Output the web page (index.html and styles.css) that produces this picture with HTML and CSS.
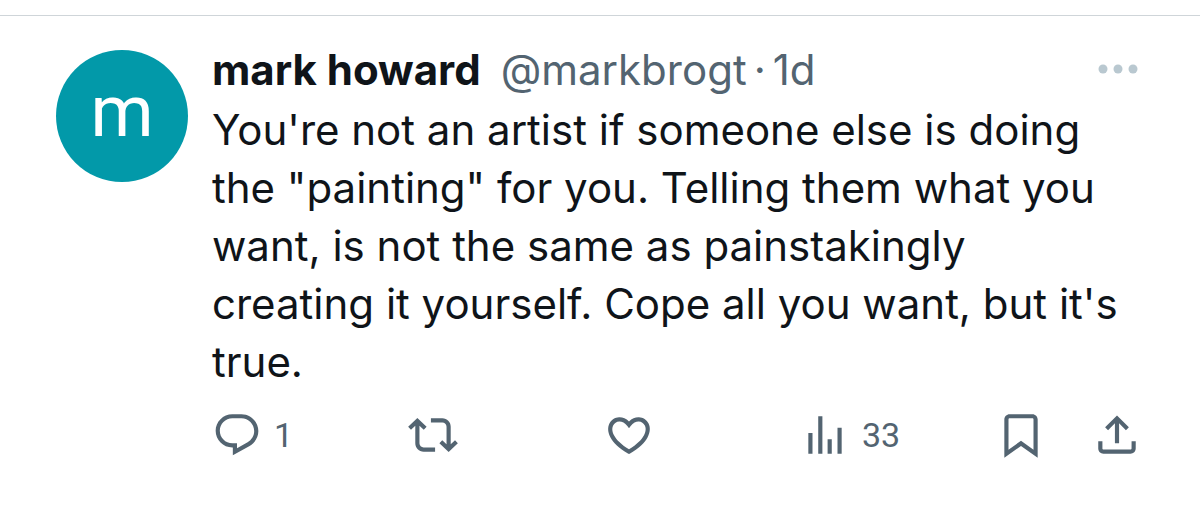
FILE: index.html
```
<!DOCTYPE html>
<html lang="en">
<head>
    <meta charset="UTF-8">
    <meta name="viewport" content="width=device-width, initial-scale=1.0">
    <title>mark howard</title>
    <link rel="stylesheet" href="styles.css">
</head>
<body>
    <article class="post">
        <!-- Avatar -->
        <a href="#" class="avatar" aria-label="mark howard">m</a>

        <div class="content">
            <!-- Post header -->
            <header class="post-header">
                <a href="#" class="name">mark howard</a>
                <div class="meta">
                    <a href="#">@markbrogt</a>
                    <span>·</span>
                    <a href="#">1d</a>
                </div>
                <button type="button" class="more" aria-label="More">
                    <svg width="40" height="10" viewBox="0 0 40 10"><circle cx="5" cy="5" r="4.5"/><circle cx="20" cy="5" r="4.5"/><circle cx="35" cy="5" r="4.5"/></svg>
                </button>
            </header>

            <p class="text">You're not an artist if someone else is doing<br>
                the "painting" for you. Telling them what you<br>
                want, is not the same as painstakingly<br>
                creating it yourself. Cope all you want, but it's<br>
                true.</p>

            <!-- Action buttons -->
            <div class="actions">
                <button type="button" class="action" aria-label="Reply">
                    <svg width="50" height="50" viewBox="0 0 24 24"><path d="M1.751 10c0-4.42 3.584-8 8.005-8h4.366c4.49 0 8.129 3.64 8.129 8.13 0 2.96-1.607 5.68-4.196 7.11l-8.054 4.46v-3.69h-.067c-4.49.1-8.183-3.51-8.183-8.01zm8.005-6c-3.317 0-6.005 2.69-6.005 6 0 3.37 2.77 6.08 6.138 6.01l.351-.01h1.761v2.3l5.087-2.81c1.951-1.08 3.163-3.13 3.163-5.36 0-3.39-2.744-6.13-6.129-6.13H9.756z"/></svg>
                    <span>1</span>
                </button>
                <button type="button" class="action" aria-label="Repost">
                    <svg width="50" height="50" viewBox="0 0 24 24"><path d="M4.5 3.88l4.432 4.14-1.364 1.46L5.5 7.55V16c0 1.1.896 2 2 2H13v2H7.5c-2.209 0-4-1.79-4-4V7.55L1.432 9.48.068 8.02 4.5 3.88zM16.5 6H11V4h5.5c2.209 0 4 1.79 4 4v8.45l2.068-1.93 1.364 1.46-4.432 4.14-4.432-4.14 1.364-1.46 2.068 1.93V8c0-1.1-.896-2-2-2z"/></svg>
                </button>
                <button type="button" class="action" aria-label="Like">
                    <svg width="50" height="50" viewBox="0 0 24 24"><path d="M16.697 5.5c-1.222-.06-2.679.51-3.89 2.16l-.805 1.09-.806-1.09C9.984 6.01 8.526 5.44 7.304 5.5c-1.243.07-2.349.78-2.91 1.91-.552 1.12-.633 2.78.479 4.82 1.074 1.97 3.257 4.27 7.129 6.61 3.87-2.34 6.052-4.64 7.126-6.61 1.111-2.04 1.03-3.7.477-4.82-.561-1.13-1.666-1.84-2.908-1.91zm4.187 7.69c-1.351 2.48-4.001 5.12-8.379 7.67l-.503.3-.504-.3c-4.379-2.55-7.029-5.19-8.382-7.67-1.36-2.5-1.41-4.86-.514-6.67.887-1.79 2.647-2.91 4.601-3.01 1.651-.09 3.368.56 4.798 2.01 1.429-1.45 3.146-2.1 4.796-2.01 1.954.1 3.714 1.22 4.601 3.01.896 1.81.846 4.17-.514 6.67z"/></svg>
                </button>
                <button type="button" class="action" aria-label="Views">
                    <svg width="50" height="50" viewBox="0 0 24 24"><path d="M8.75 21V3h2v18h-2zM18 21V8.5h2V21h-2zM4 21l.004-10h2L6 21H4zm9.248 0v-7h2v7h-2z"/></svg>
                    <span>33</span>
                </button>
                <div class="group">
                    <button type="button" class="action" aria-label="Bookmark">
                        <svg width="50" height="50" viewBox="0 0 24 24"><path d="M4 4.5C4 3.12 5.119 2 6.5 2h11C18.881 2 20 3.12 20 4.5v18.44l-8-5.71-8 5.71V4.5zM6.5 4c-.276 0-.5.22-.5.5v14.56l6-4.29 6 4.29V4.5c0-.28-.224-.5-.5-.5h-11z"/></svg>
                    </button>
                    <button type="button" class="action" aria-label="Share">
                        <svg width="50" height="50" viewBox="0 0 24 24"><path d="M12 2.59l5.7 5.7-1.41 1.42L13 6.41V16h-2V6.41l-3.3 3.3-1.41-1.42L12 2.59zM21 15l-.02 3.51c0 1.38-1.12 2.49-2.5 2.49H5.5C4.11 21 3 19.88 3 18.5V15h2v3.5c0 .28.22.5.5.5h12.98c.28 0 .5-.22.5-.5L19 15h2z"/></svg>
                    </button>
                </div>
            </div>
        </div>
    </article>
</body>
</html>
```
FILE: styles.css
```
body {
    margin: 0;
    background-color: #fff;
    color: #0f1419;
    font-family: "Inter", "Liberation Sans", sans-serif;
}
a {
    color: inherit;
    text-decoration: none;
}
button {
    padding: 0;
    border: none;
    background: none;
    color: inherit;
    font: inherit;
    cursor: pointer;
}
svg {
    display: block;
    fill: currentColor;
}
.post {
    display: flex;
    gap: 24px;
    margin-top: 15px;
    padding: 26px 58px 0 56px;
    border-top: 1px solid #cfd5d9;
}
.avatar {
    display: flex;
    flex-shrink: 0;
    align-items: center;
    justify-content: center;
    box-sizing: border-box;
    width: 132px;
    height: 132px;
    margin-top: 8px;
    padding-bottom: 10px;
    border-radius: 50%;
    background-color: #0299a9;
    color: #fff;
    font-family: Roboto, sans-serif;
    font-size: 72px;
}
.content {
    flex: 1;
    min-width: 0;
}
.post-header {
    display: flex;
    align-items: center;
    gap: 20px;
    height: 54px;
    color: #536471;
    font-size: 42px;
}
.name {
    color: #0f1419;
    font-weight: 700;
}
.meta {
    display: flex;
    gap: 7px;
}
.more {
    margin-left: auto;
    padding: 0 4px;
    color: #b9c8d0;
}
.text {
    margin: 5px 0 0;
    font-size: 42px;
    line-height: 58px;
}
.actions {
    display: grid;
    grid-template-columns: repeat(4, 1fr) auto;
    align-items: center;
    margin-top: 19px;
    color: #536471;
    font-family: Roboto, sans-serif;
    font-size: 34px;
}
.action {
    display: flex;
    align-items: center;
    gap: 12px;
}
.group {
    display: flex;
    gap: 46px;
}
```
